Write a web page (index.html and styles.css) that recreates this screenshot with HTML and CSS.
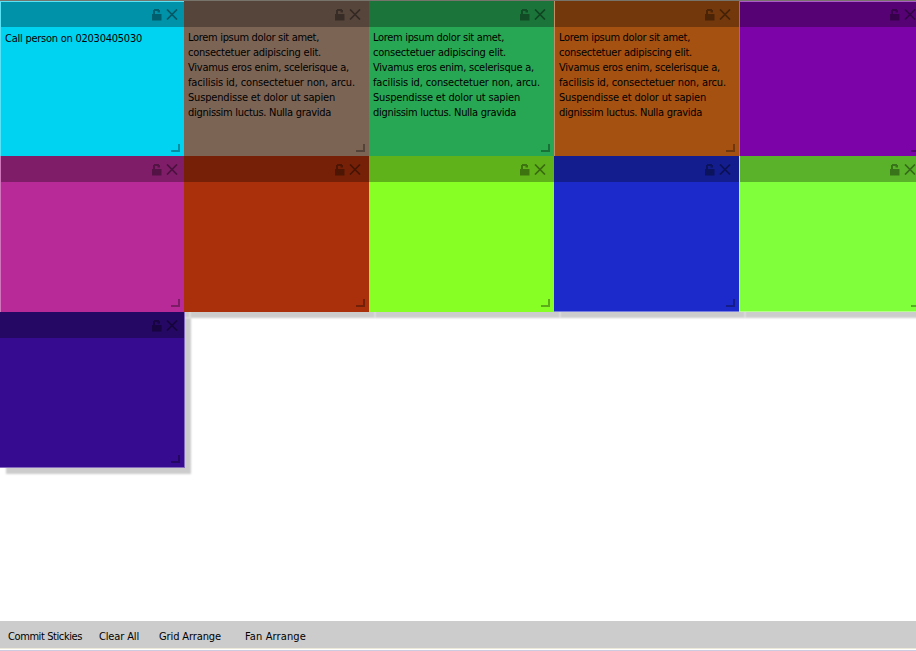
FILE: index.html
```
<!DOCTYPE html>
<html lang="en">
<head>
<meta charset="utf-8">
<title>Stickies</title>
<link rel="stylesheet" href="styles.css">
</head>
<body>
<svg class="symbols" aria-hidden="true">
  <symbol id="lock" viewBox="0 0 10 12"><path d="M0 5H1V1H2V0H7V1H8V3.5H5.5V2H3V5H9.5V11.5H0Z"/></symbol>
  <symbol id="close" viewBox="0 0 12 11"><path d="M1 .5L11 10.5M11 .5L1 10.5" fill="none" stroke="#000" stroke-width="1.7"/></symbol>
</svg>
<main class="board" id="board"></main>
<footer class="toolbar">
  <button class="commit">Commit Stickies</button>
  <button class="clear">Clear All</button>
  <button class="grid">Grid Arrange</button>
  <button class="fan">Fan Arrange</button>
</footer>
<div class="frame"></div>
<script src="app.js"></script>
</body>
</html>
```
FILE: styles.css
```
* { box-sizing: border-box; }

body {
  margin: 0;
  width: 916px;
  height: 651px;
  overflow: hidden;
  display: flex;
  flex-direction: column;
  background: #fff;
  color: #000;
  font: 11px/15px "DejaVu Sans Condensed", "DejaVu Sans", sans-serif;
}

.symbols { position: absolute; width: 0; height: 0; }

.board {
  flex: 1;
  min-height: 0;
  display: grid;
  grid-template-columns: 184px 185px 185px 185px 185px;
  grid-template-rows: 155px 156px 155.5px;
  border-top: 1px solid #77746c;
  overflow: hidden;
}

.sticky {
  position: relative;
  display: flex;
  flex-direction: column;
  box-shadow: 6px 6px 2px #ccc;
}

.sticky.edge-left { border-left: 1px solid rgba(255, 255, 255, .35); }
.sticky.edge-top { border-top: 1px solid rgba(255, 255, 255, .35); }
.sticky.last { width: 185px; border-right: 1px solid rgba(255, 255, 255, .4); }
.sticky.edge-bottom { border-bottom: 1px solid rgba(255, 255, 255, .4); }

.bar {
  flex: none;
  height: 26px;
  display: flex;
  justify-content: flex-end;
  padding: 8px 8px 0 0;
  gap: 4px;
  background: rgba(0, 0, 0, .3);
}

.edge-top .bar { height: 25px; padding-top: 7px; }
.first-column .bar { padding-right: 6px; }

.lock { width: 10px; height: 12px; opacity: .34; }
.close { width: 12px; height: 11px; opacity: .4; }

.note { padding: 3px 0 0 4px; }
.phone .note { padding-top: 4px; }

.line {
  display: block;
  width: max-content;
  white-space: nowrap;
}

.grip {
  position: absolute;
  right: 4px;
  bottom: 4px;
  width: 9px;
  height: 8px;
  border: solid rgba(0, 0, 0, .32);
  border-width: 0 2px 2px 0;
}

.second-row .grip { bottom: 5px; }
.second-row.edge-bottom .grip { bottom: 4px; }

.toolbar {
  flex: none;
  height: 27px;
  display: flex;
  align-items: flex-start;
  padding-left: 8px;
  background: #ccc;
}

.toolbar button {
  padding: 8px 0 0;
  margin: 0;
  border: 0;
  background: none;
  color: inherit;
  font: inherit;
  text-align: left;
  white-space: nowrap;
}

.commit { width: 91px; }
.clear { width: 60px; }
.grid { width: 86px; }

.frame {
  flex: none;
  height: 3px;
  border-top: 1px solid #ece9d8;
  border-bottom: 1px solid #cccbe0;
}
```
FILE: app.js
```
const lorem = [
  'Lorem ipsum dolor sit amet,',
  'consectetuer adipiscing elit.',
  'Vivamus eros enim, scelerisque a,',
  'facilisis id, consectetuer non, arcu.',
  'Suspendisse et dolor ut sapien',
  'dignissim luctus. Nulla gravida'
];
const loremWidths = [131, 133, 161, 167, 147, 143];
const notes = [
  { color: '#00d2f1', cls: 'phone first-column edge-left edge-top', lines: ['Call person on 02030405030'], widths: [137] },
  { color: '#7c6455', cls: '', lines: lorem, widths: loremWidths },
  { color: '#27a753', cls: '', lines: lorem, widths: loremWidths },
  { color: '#a55112', cls: 'edge-left', lines: lorem, widths: loremWidths },
  { color: '#7c03a8', cls: 'edge-left edge-top' },
  { color: '#b72a97', cls: 'second-row first-column edge-left' },
  { color: '#a9300b', cls: 'second-row' },
  { color: '#88ff24', cls: 'second-row' },
  { color: '#1c2acc', cls: 'second-row edge-bottom' },
  { color: '#80ff3b', cls: 'second-row edge-left edge-bottom' },
  { color: '#360b90', cls: 'first-column last edge-bottom' }
];

const board = document.getElementById('board');
for (const note of notes) {
  const el = document.createElement('article');
  el.className = 'sticky ' + note.cls;
  el.style.backgroundColor = note.color;
  el.innerHTML = '<header class="bar"><svg class="lock"><use href="#lock"/></svg>' +
    '<svg class="close"><use href="#close"/></svg></header>' +
    '<div class="note"></div><i class="grip"></i>';
  board.append(el);
  (note.lines || []).forEach((text, i) => {
    const line = document.createElement('span');
    line.className = 'line';
    line.textContent = text;
    el.querySelector('.note').append(line);
    fit(line, note.widths[i]);
  });
}

// Spread the letters so that a label fills its measured width.
function fit(el, width) {
  const range = document.createRange();
  range.selectNodeContents(el);
  const natural = range.getBoundingClientRect().width;
  el.style.letterSpacing = (width - natural) / el.textContent.length + 'px';
}

[74, 40, 62, 61].forEach((w, i) => fit(document.querySelectorAll('.toolbar button')[i], w));
```
